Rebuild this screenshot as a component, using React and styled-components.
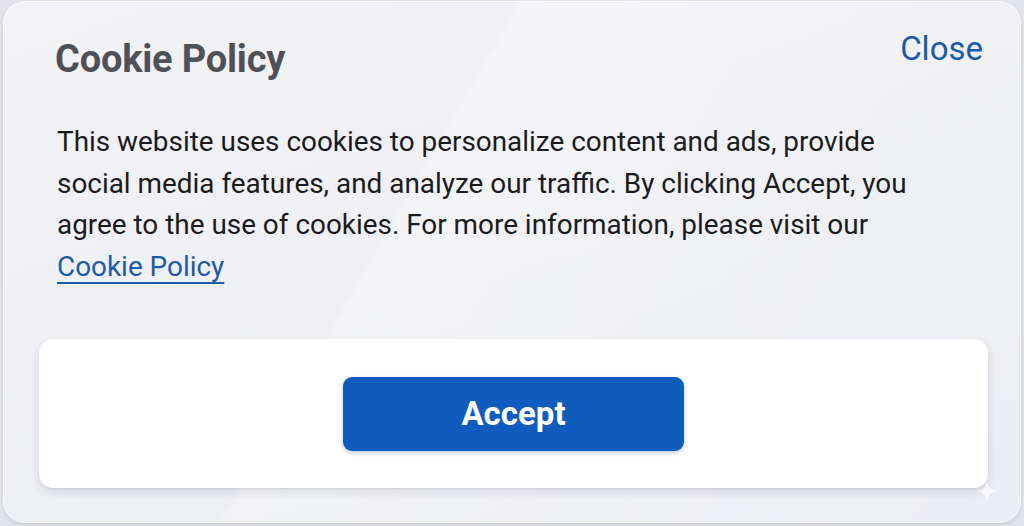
import React from 'react';
import styled, { createGlobalStyle } from 'styled-components';

const GlobalStyle = createGlobalStyle`
  html, body {
    margin: 0;
    padding: 0;
    background: #e3e4ea;
  }
  body {
    font-family: Roboto, "Noto Sans", Arial, sans-serif;
  }
  * {
    box-sizing: border-box;
  }
`;

const Page = styled.div`
  width: 1024px;
  height: 526px;
  padding: 1px 3px 3px 3px;
`;

const Card = styled.section`
  position: relative;
  height: 522px;
  border-radius: 22px;
  background:
    linear-gradient(120deg, rgba(255, 255, 255, 0) 0%, rgba(255, 255, 255, 0) 39%, rgba(255, 255, 255, 0.28) 39.5%, rgba(255, 255, 255, 0.1) 70%, rgba(255, 255, 255, 0) 100%),
    linear-gradient(160deg, #f3f3f6 0%, #eeeff3 60%, #ecedf2 100%);
  box-shadow: 0 2px 4px rgba(40, 45, 70, 0.12), inset 0 0 0 1px rgba(255, 255, 255, 0.7);
  padding: 0 33px 0 36px;
  display: flex;
  flex-direction: column;
  overflow: hidden;
`;

const Header = styled.header`
  display: flex;
  justify-content: space-between;
  align-items: flex-start;
  padding: 28px 5px 0 16px;
`;

const Title = styled.h1`
  margin: 10px 0 0;
  font-size: 38px;
  line-height: 40px;
  font-weight: 700;
  color: #505057;
  letter-spacing: -0.2px;
`;

const CloseLink = styled.a`
  font-size: 33px;
  line-height: 40px;
  color: #1c5ba8;
  text-decoration: none;
  cursor: pointer;
`;

const Message = styled.p`
  margin: 42px 0 0;
  padding-left: 18px;
  max-width: 885px;
  font-size: 27.9px;
  line-height: 41.5px;
  color: #1b1b1d;
`;

const PolicyLink = styled.a`
  color: #1c5ba8;
  text-decoration: underline;
  text-decoration-thickness: 2px;
  text-underline-offset: 6px;
`;

const ActionPanel = styled.div`
  margin-top: 52px;
  height: 149px;
  border-radius: 14px;
  background: #ffffff;
  box-shadow: 0 4px 10px rgba(30, 35, 60, 0.12), 0 1px 2px rgba(30, 35, 60, 0.06);
  display: flex;
  align-items: center;
  justify-content: center;
`;

const AcceptButton = styled.button`
  width: 341px;
  height: 74px;
  border: none;
  border-radius: 9px;
  background: #105cbc;
  color: #ffffff;
  font-family: Roboto, "Noto Sans", Arial, sans-serif;
  font-size: 33px;
  font-weight: 700;
  box-shadow: 0 2px 5px rgba(16, 60, 130, 0.25);
  cursor: pointer;
`;

const Sparkle = styled.svg`
  position: absolute;
  right: 23px;
  bottom: 21px;
  width: 22px;
  height: 22px;
  opacity: 0.7;
`;

function App() {
  return (
    <Page>
      <GlobalStyle />
      <Card>
        <Header>
          <Title>Cookie Policy</Title>
          <CloseLink>Close</CloseLink>
        </Header>
        <Message>
          This website uses cookies to personalize content and ads, provide
          social media features, and analyze our traffic. By clicking Accept, you
          agree to the use of cookies. For more information, please visit our{' '}
          <PolicyLink href="#">Cookie Policy</PolicyLink>
        </Message>
        <ActionPanel>
          <AcceptButton>Accept</AcceptButton>
        </ActionPanel>
        <Sparkle viewBox="0 0 28 28">
          <path d="M14 1 C15 9 19 13 27 14 C19 15 15 19 14 27 C13 19 9 15 1 14 C9 13 13 9 14 1 Z" fill="#ffffff" />
        </Sparkle>
      </Card>
    </Page>
  );
}

export default App;
